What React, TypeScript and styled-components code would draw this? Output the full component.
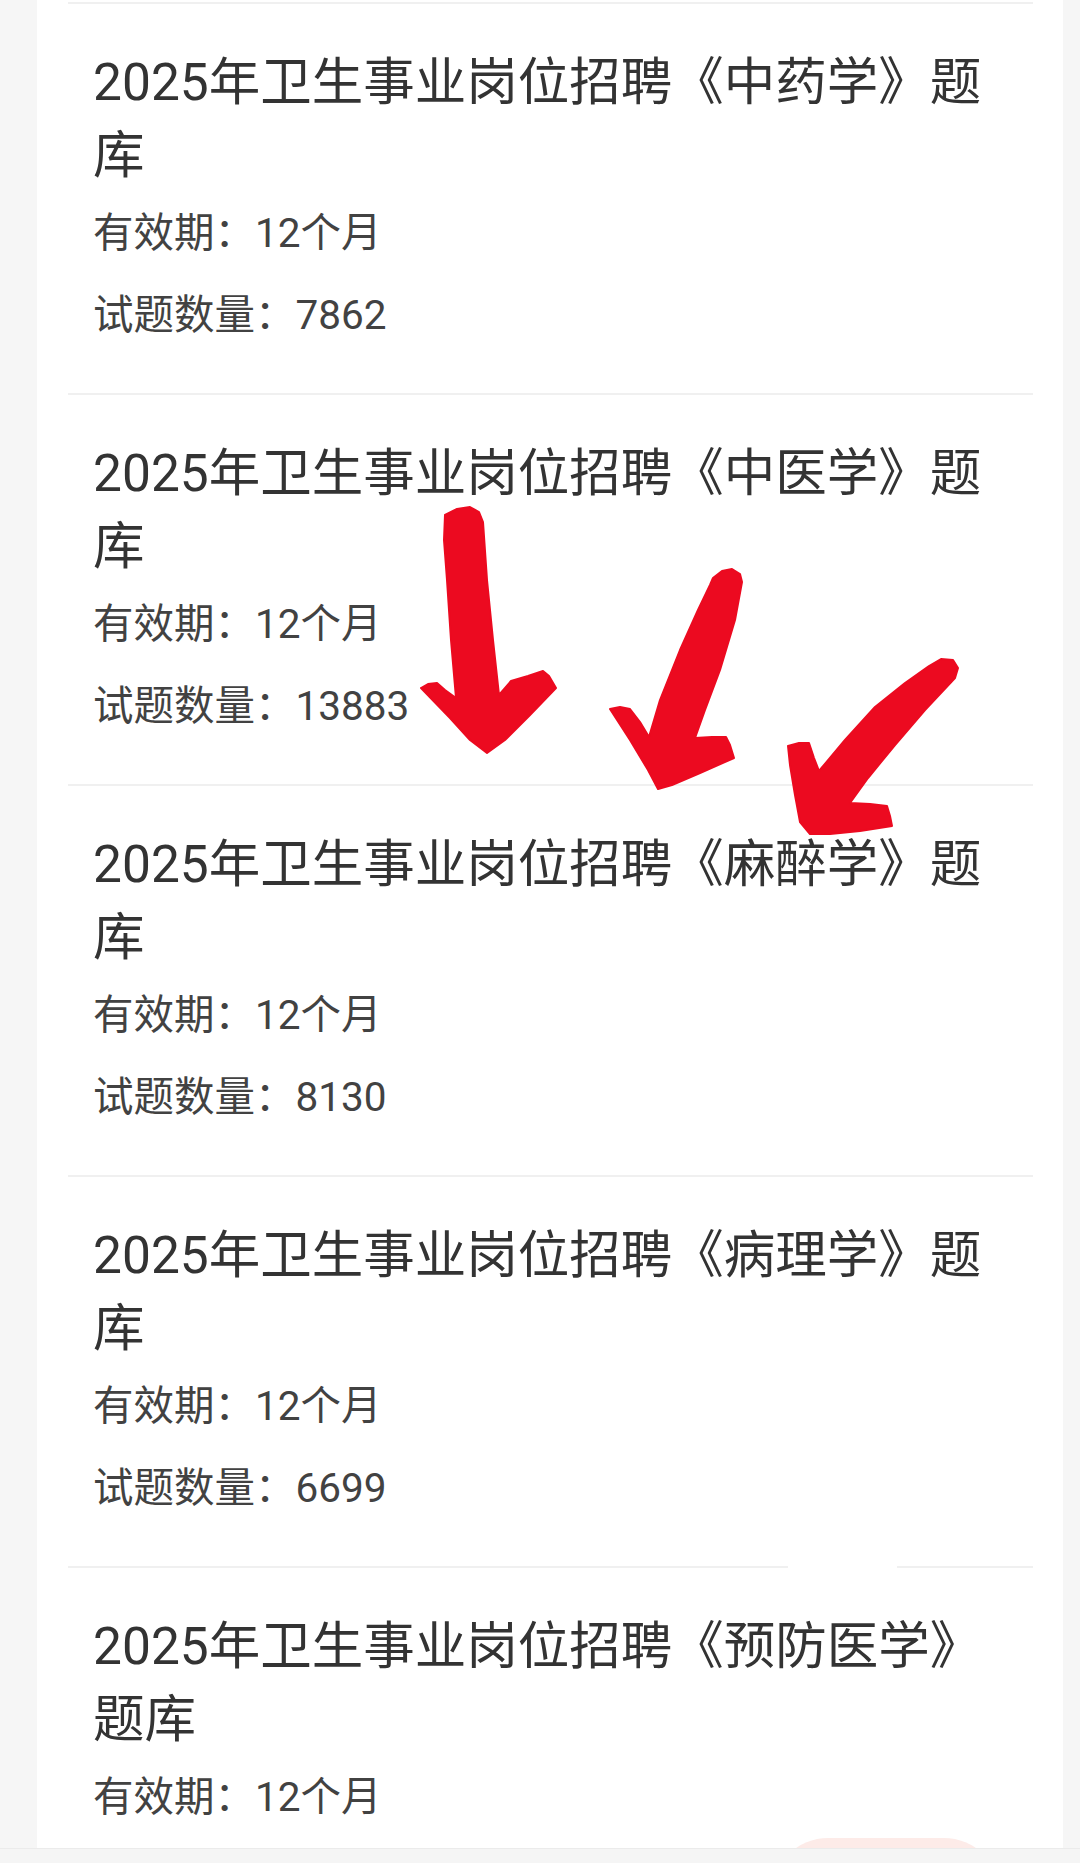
import React from "react";
import styled, { createGlobalStyle } from "styled-components";

const GlobalStyle = createGlobalStyle`
  body {
    margin: 0;
    background: #f6f6f6;
    font-family: Roboto, "Noto Sans CJK SC", sans-serif;
  }
`;

const Page = styled.div`
  position: relative;
  height: 1863px;
  overflow: hidden;
`;
const Card = styled.div`
  margin-left: 37px;
  width: 1026px;
  box-sizing: border-box;
  padding: 2px 30px 0 31px;
  background: #ffffff;
  min-height: 100%;
`;
const Item = styled.div`
  border-top: 2px solid #f0f0f0;
  padding: 43px 25px 37px;
`;
const Title = styled.div`
  font-size: 51.5px;
  line-height: 72.5px;
  color: #333333;
  white-space: pre;
`;
const MetaRow = styled.div`
  display: flex;
  justify-content: space-between;
  align-items: center;
`;
const Meta = styled.div`
  font-size: 40.5px;
  line-height: 82px;
  color: #424242;
`;
const Action = styled.button`
  all: unset;
  width: 228px;
  height: 112px;
  margin-right: 8px;
  border-radius: 56px;
  background: #fdebe8;
`;
const BottomBar = styled.div`
  position: fixed;
  left: 0;
  right: 0;
  bottom: 0;
  height: 14px;
  background: #f5f5f5;
  border-top: 1px solid #ebebeb;
  z-index: 2;
`;
const Marks = styled.svg`
  position: absolute;
  top: 0;
  left: 0;
  pointer-events: none;
  z-index: 1;
`;

interface IBank {
  title: string;
  months: number;
  count?: number;
  action?: boolean;
}

const banks: IBank[] = [
  { title: "2025年卫生事业岗位招聘《中药学》题\n库", months: 12, count: 7862 },
  { title: "2025年卫生事业岗位招聘《中医学》题\n库", months: 12, count: 13883 },
  { title: "2025年卫生事业岗位招聘《麻醉学》题\n库", months: 12, count: 8130 },
  { title: "2025年卫生事业岗位招聘《病理学》题\n库", months: 12, count: 6699 },
  { title: "2025年卫生事业岗位招聘《预防医学》\n题库", months: 12, action: true },
];

// hand drawn red arrows on top of the list
const arrows = [
  "M445 515 L457 509 L470 507 L479 512 L483 522 L487 580 L493 640 L499 695 L511 681 L528 676 L543 671 L549 676 L556 688 L530 715 L505 740 L487 753 L470 740 L450 718 L421 688 L428 684 L437 683 L445 690 L456 698 L451 640 L447 580 L444 540 Z",
  "M713 578 L722 571 L732 569 L740 574 L742 582 L735 620 L720 670 L705 710 L695 738 L712 737 L726 737 L730 745 L734 758 L700 773 L672 785 L658 789 L648 770 L630 740 L610 709 L620 707 L630 709 L640 722 L649 737 L660 700 L680 650 L698 610 L710 585 Z",
  "M929 666 L941 659 L953 660 L958 668 L955 678 L925 710 L895 745 L868 778 L850 803 L870 804 L887 806 L890 816 L892 826 L860 831 L830 834 L810 834 L800 822 L795 795 L790 765 L788 746 L799 743 L809 743 L814 758 L819 771 L845 740 L875 707 L905 683 Z",
];

const App = () => {
  return (
    <Page>
      <GlobalStyle />
      <Card>
        {banks.map((b) => (
          <Item key={b.title}>
            <Title>{b.title}</Title>
            <Meta>有效期：{b.months}个月</Meta>
            <MetaRow>
              <Meta>{b.count ? `试题数量：${b.count}` : ""}</Meta>
              {b.action ? <Action aria-label="action" /> : null}
            </MetaRow>
          </Item>
        ))}
      </Card>
      <Marks width="1080" height="1863" viewBox="0 0 1080 1863">
        <rect x="788" y="1563" width="109" height="7" fill="#ffffff" />
        {arrows.map((d, i) => (
          <path key={i} d={d} fill="#ec0a20" stroke="#ec0a20" strokeWidth="2" strokeLinejoin="round" />
        ))}
      </Marks>
      <BottomBar />
    </Page>
  );
};

export default App;
